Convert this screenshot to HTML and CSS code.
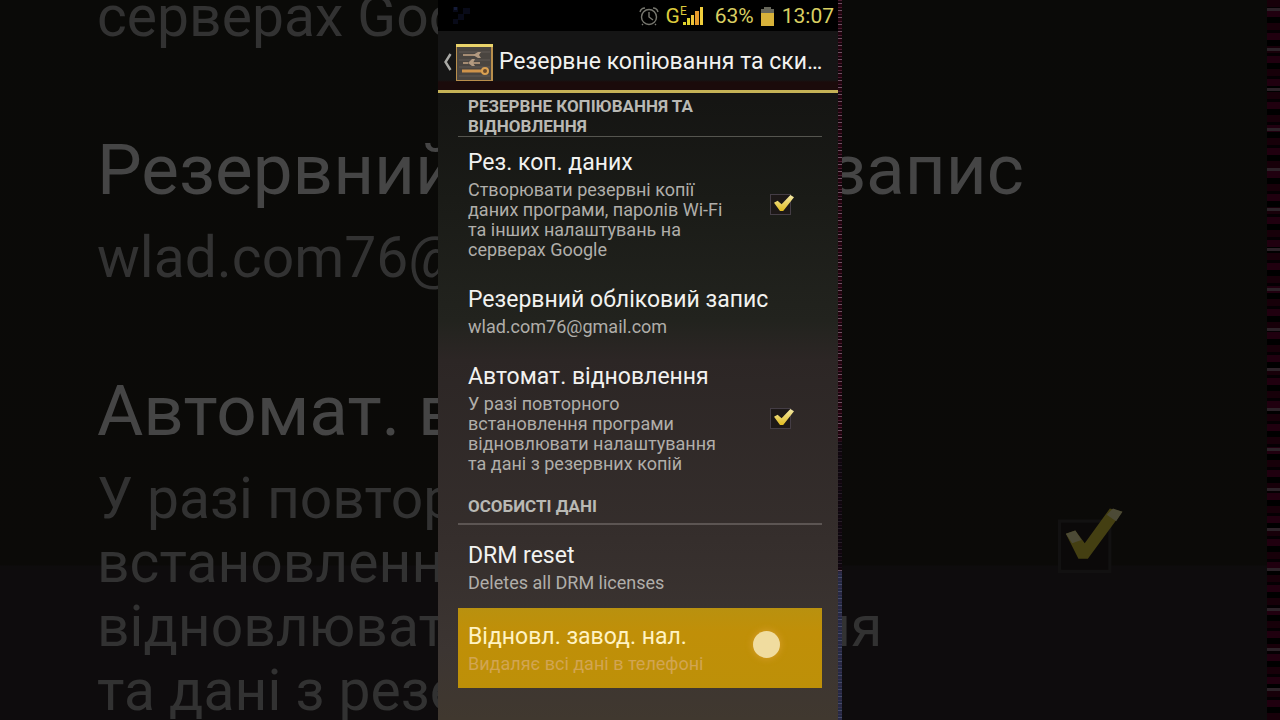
FILE: index.html
```
<!DOCTYPE html>
<html lang="uk">
<head>
<meta charset="utf-8">
<meta name="viewport" content="width=device-width, initial-scale=1">
<title>Резервне копіювання та скидання</title>
<link rel="stylesheet" href="styles.css">
</head>
<body>
<div class="stage">
  <div class="backdrop" aria-hidden="true">
    <div class="backdrop-list">
      <p class="big-summary">серверах Google</p>
      <p class="big-title">Резервний обліковий запис</p>
      <p class="big-summary">wlad.com76@gmail.com</p>
      <div class="big-row">
        <div class="big-text">
          <p class="big-title">Автомат. відновлення</p>
          <p class="big-summary">У разі повторного<br>встановлення програми<br>відновлювати налаштування<br>та дані з резервних копій</p>
        </div>
        <svg class="big-check" viewBox="0 0 28 28"><path d="M4 8h16v16H4z" fill="#0b0909" stroke="#121111"/><path d="M6 12l3-1 3 4L20 4l4 1-11 15h-3z" fill="#443f12"/><path d="M6 12l3-1 2 3-3 1zM19 6l2-2 3 1-2 3z" fill="#4c4a36"/></svg>
      </div>
    </div>
    <div class="noise-edge"></div>
  </div>

  <main class="phone">
    <div class="screen">
      <div class="status-bar">
        <svg class="debug-icon" viewBox="0 0 20 20" aria-hidden="true"><path d="M1 1h5v5H1zM11 2h7v6h-7zM6 8h6v6H6zM1 13h5v5H1z" fill="#080a18"/><path d="M2 1h3v3H2z" fill="#141b38"/></svg>
        <svg class="alarm-icon" viewBox="0 0 20 20" fill="none" stroke="#77776f" stroke-width="1.4" aria-label="Будильник"><circle cx="10" cy="11" r="7.5"/><path d="M10 6v5l4 3M1 6Q2 2 6 2M14 2q4 0 5 4M4 18l-1 1M16 18l1 1"/></svg>
        <span class="network">G<sup class="edge">E</sup></span>
        <svg class="signal-icon" viewBox="0 0 20 18" aria-label="Сигнал"><path d="M0 15h3v3H0zM4 11h3v7H4z" fill="#e0d22c"/><path d="M8 8h3v10H8z" fill="#efc43a"/><path d="M12 4h4v14h-4z" fill="#e79a2c"/><path d="M17 0h3v18h-3z" fill="#f0ce3c"/></svg>
        <span class="battery-level">63%</span>
        <svg class="battery-icon" viewBox="0 0 13 19" aria-label="Батарея"><path d="M3 0h7v2h3v5H0V2h3z" fill="#66665a"/><path d="M0 6h13v13H0z" fill="#d8b23a"/></svg>
        <time class="clock">13:07</time>
      </div>

      <header class="action-bar">
        <button class="up-button" type="button" aria-label="Назад">
          <svg class="chevron" viewBox="0 0 9 18" fill="none" stroke="#a9a9a5" stroke-width="2.4"><path d="M8 1L3 9l5 8"/></svg>
          <svg class="settings-icon" viewBox="0 0 37 37"><path d="M0 0h37v37H0z" fill="#b98f4c"/><path d="M1 3h34v33H1z" fill="#4a4540"/><path d="M0 0h37v3H0z" fill="#e9d36a"/><path d="M3 8h31M3 16h31M3 23h31M3 32h31" stroke="#605a54"/><path d="M7 11h12M7 19h5M16 19h8" stroke="#a58c73" stroke-width="2"/><path d="M17 11l5-3h3l-2 3 2 3h-3zM12 19l4-4h3l-2 4 2 3h-3z" fill="#b39a80"/><path d="M6 27h21" stroke="#cf934a" stroke-width="3"/><circle cx="29" cy="27" r="3" fill="#6a4a2a" stroke="#d9a052" stroke-width="2"/></svg>
        </button>
        <h1 class="screen-title">Резервне копіювання та скидання</h1>
      </header>

      <div class="list">
        <h2 class="section first">РЕЗЕРВНЕ КОПІЮВАННЯ ТА ВІДНОВЛЕННЯ</h2>
        <label class="row" for="backup">
          <span class="text">
            <span class="title">Рез. коп. даних</span>
            <span class="summary">Створювати резервні копії даних програми, паролів Wi-Fi та інших налаштувань на серверах Google</span>
          </span>
          <input class="check" id="backup" type="checkbox" checked>
        </label>
        <button class="row" type="button">
          <span class="text wide">
            <span class="title">Резервний обліковий запис</span>
            <span class="summary">wlad.com76@gmail.com</span>
          </span>
        </button>
        <label class="row" for="restore">
          <span class="text">
            <span class="title">Автомат. відновлення</span>
            <span class="summary">У разі повторного встановлення програми відновлювати налаштування та дані з резервних копій</span>
          </span>
          <input class="check" id="restore" type="checkbox" checked>
        </label>
        <h2 class="section personal">ОСОБИСТІ ДАНІ</h2>
        <button class="row" type="button">
          <span class="text wide">
            <span class="title">DRM reset</span>
            <span class="summary">Deletes all DRM licenses</span>
          </span>
        </button>
        <button class="row pressed" type="button">
          <span class="text">
            <span class="title">Відновл. завод. нал.</span>
            <span class="summary">Видаляє всі дані в телефоні</span>
          </span>
          <span class="touch"></span>
        </button>
      </div>
    </div>
    <div class="noise-seam" aria-hidden="true"></div>
  </main>
</div>
</body>
</html>
```
FILE: styles.css
```
* { box-sizing: border-box; }

body {
  margin: 0;
  background: #0a0a08;
  color: #f2f2f0;
  font-family: Roboto, "Noto Sans", sans-serif;
}

p, h1, h2 { margin: 0; font-weight: 400; }

button {
  border: 0;
  background: none;
  color: inherit;
  font: inherit;
  text-align: left;
}

.stage {
  position: relative;
  display: flex;
  justify-content: center;
  min-height: 100vh;
  overflow: hidden;
}

/* Dimmed enlarged copy behind the phone */
.backdrop {
  position: absolute;
  inset: 0;
  display: flex;
  overflow: hidden;
  background: linear-gradient(#0a0a08, #0b0a08 565px, #0e0c0d 566px);
}

.backdrop-list {
  flex: 1;
  min-width: 0;
  margin-top: -15px;
  padding-left: 97px;
  white-space: nowrap;
}

.big-title {
  padding-top: 77px;
  color: #454545;
  font-size: 71px;
  line-height: 88px;
}

.big-summary {
  padding-top: 12px;
  color: #323232;
  font-size: 57px;
  line-height: 64px;
}

.big-summary:first-child { padding-top: 0; }

.big-row {
  display: flex;
  align-items: center;
  justify-content: space-between;
}

.big-text { width: 800px; }

.big-check {
  flex: none;
  width: 88px;
  height: 88px;
  margin-right: 132px;
  margin-top: 66px;
}

.noise-edge {
  width: 13px;
  background:
    repeating-linear-gradient(transparent 0 8px, #2c2228 8px 11px, transparent 11px 40px),
    repeating-linear-gradient(#170009 0 7px, #050003 7px 10px, #20000f 10px 17px, #000 17px 23px);
}

/* Phone */
.phone {
  position: relative;
  display: flex;
  width: 404px;
  max-width: 100%;
}

.screen {
  flex: 1;
  min-width: 0;
  background: linear-gradient(#131313 0, #151513 100px, #1a1b17 200px, #22231e 320px, #2c2625 360px, #352e2c 540px, #3c3532 650px, #40382f 720px);
}

.noise-seam {
  width: 4px;
  background:
    linear-gradient(transparent 440px, #08080eb0 442px 568px, transparent 570px),
    linear-gradient(transparent 570px, #2c466e90 572px),
    repeating-linear-gradient(#4a1c30 0 1px, #16040c 1px 3px, #6e5262 3px 4px, #22040f 4px 7px);
}

.status-bar {
  display: flex;
  align-items: center;
  height: 31px;
  padding: 1px 4px 0 14px;
  background: #000;
  color: #d9cf62;
  font-size: 21px;
  line-height: 30px;
}

.debug-icon { width: 20px; height: 20px; }
.alarm-icon { width: 20px; height: 20px; margin-left: auto; }

.network {
  display: flex;
  margin-left: 7px;
  color: #dccb3c;
}

.edge {
  margin-top: -5px;
  font-size: 12px;
  line-height: 30px;
}

.signal-icon {
  width: 20px;
  height: 18px;
  margin-left: -4px;
}

.battery-level { margin-left: 12px; }
.battery-icon { width: 13px; height: 19px; margin-left: 7px; }
.clock { margin-left: 8px; }

.action-bar {
  display: flex;
  align-items: center;
  height: 62px;
  padding: 3px 12px 0 4px;
  border-bottom: 3px solid #c5b256;
  background: linear-gradient(#151515 0 49px, #1b0b0b 51px);
}

.up-button {
  display: flex;
  align-items: center;
  gap: 4px;
  padding: 0;
}

.chevron { width: 10px; height: 18px; }
.settings-icon { width: 37px; height: 37px; }

.screen-title {
  flex: 1;
  min-width: 0;
  margin-left: 6px;
  overflow: hidden;
  font-size: 23px;
  line-height: 32px;
  text-overflow: ellipsis;
  white-space: nowrap;
}

.list { padding: 0 16px 31px 20px; }

.section {
  padding: 8px 80px 7px 10px;
  border-bottom: 2px solid #5c5553;
  color: #b9b9b4;
  font-size: 17px;
  font-weight: 700;
  line-height: 20px;
}

.section.first {
  padding-top: 3px;
  padding-bottom: 0;
  border-bottom: 1px solid #55554f;
}

.section.personal { margin-bottom: 5px; }

.row {
  display: flex;
  align-items: center;
  width: 100%;
  padding: 12px 31px 14px 10px;
}

.text {
  display: flex;
  flex-direction: column;
  gap: 3px;
  width: 258px;
}

.text.wide { width: 100%; }

.title {
  font-size: 23px;
  line-height: 28px;
}

.summary {
  color: #b0aeaa;
  font-size: 18px;
  line-height: 20px;
}

.check {
  appearance: none;
  position: relative;
  width: 21px;
  height: 21px;
  margin: 0 0 0 auto;
  border: 1px solid #443d45;
  background: #1d1817;
}

.check:checked::before {
  content: "";
  position: absolute;
  inset: 0 -4px 3px 3px;
  background: linear-gradient(#f3e9a8, #e0bb20);
  clip-path: polygon(0 48%, 18% 36%, 38% 58%, 82% 0, 100% 14%, 46% 100%, 30% 100%);
}

.pressed {
  margin-top: 1px;
  padding-top: 15px;
  background: linear-gradient(#b9910f, #c08f08 30%, #bd9008);
}

.pressed .title { color: #fff3c4; }
.pressed .summary { color: #d2a552; }

.touch {
  width: 27px;
  height: 27px;
  margin-left: auto;
  margin-right: 11px;
  margin-bottom: 8px;
  border-radius: 50%;
  background: #f0dc9f;
  box-shadow: 0 0 6px 1px #d49c26;
}
```
